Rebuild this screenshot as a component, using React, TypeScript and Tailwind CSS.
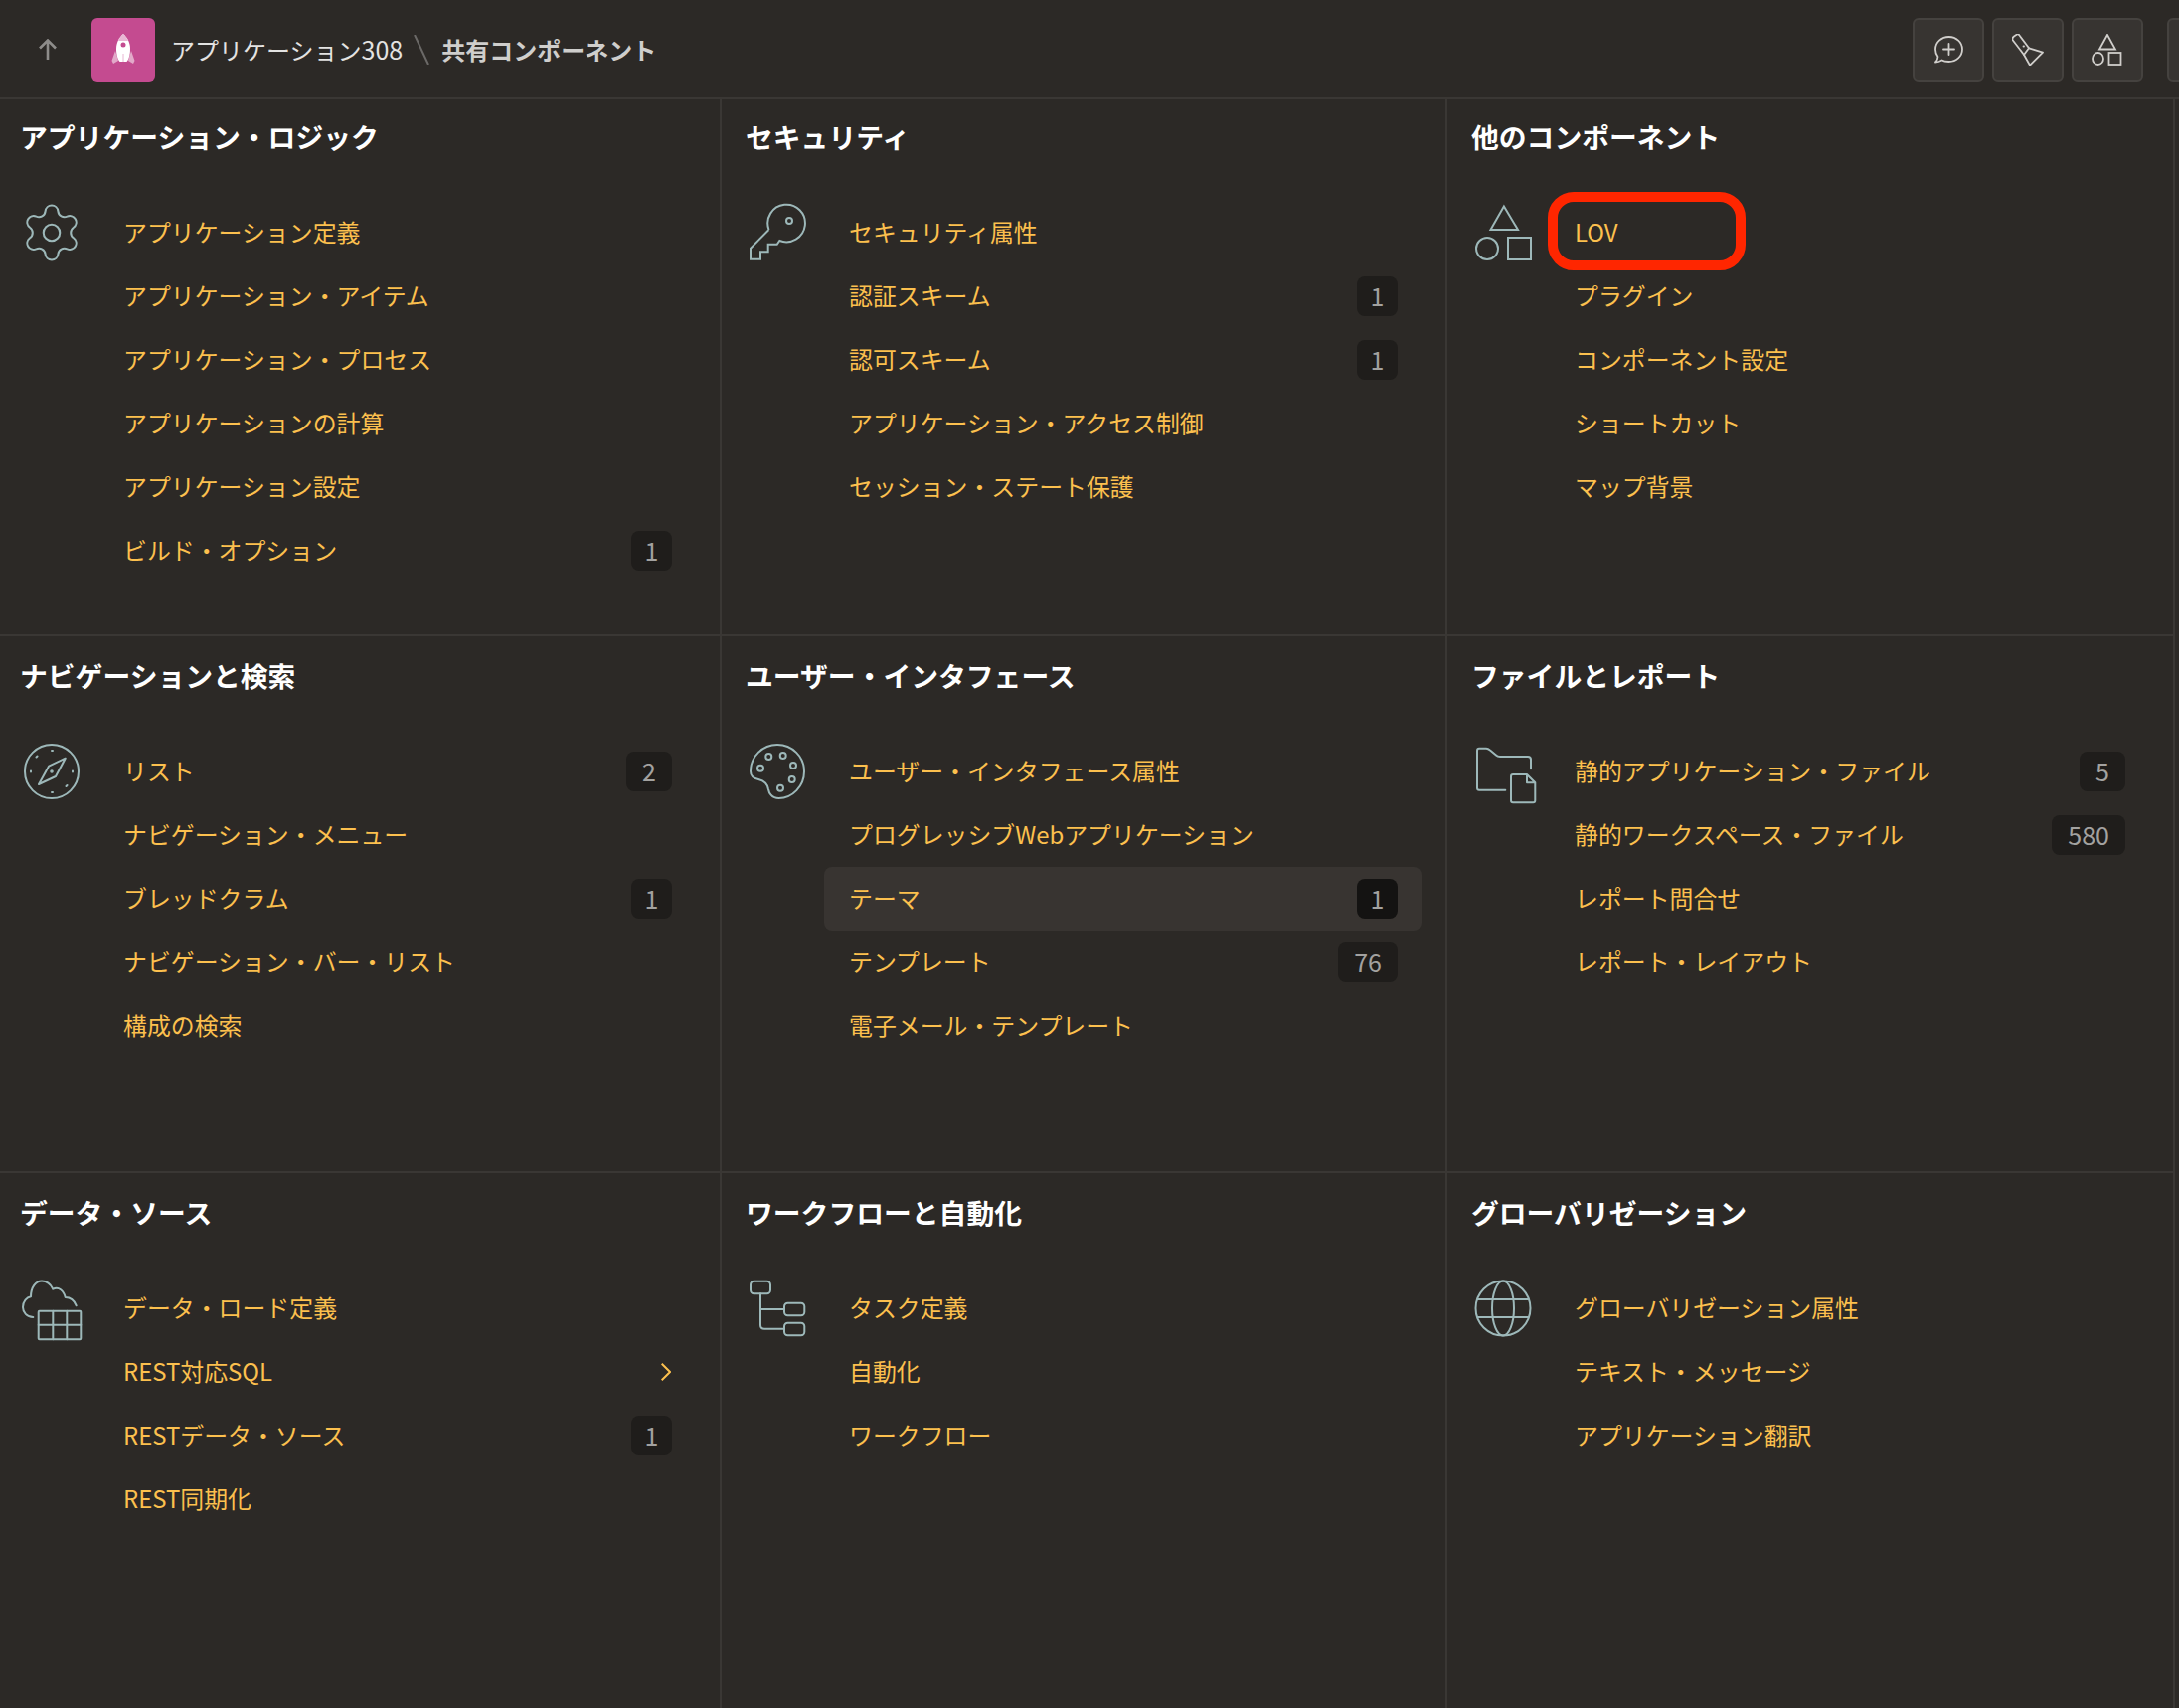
import { Settings } from "lucide-react";
import type { ReactNode } from "react";

type Item = { label: string; badge?: string; chevron?: boolean; active?: boolean; marked?: boolean };
type Section = { title: string; icon: ReactNode; items: Item[] };

const Icon = ({ children }: { children: ReactNode }) => (
  <svg
    viewBox="0 0 56 56"
    className="block h-[56px] w-[56px] overflow-visible text-[#9db8b9]"
    fill="none"
    stroke="currentColor"
    strokeWidth="2"
    strokeLinejoin="round"
    strokeLinecap="round"
  >
    {children}
  </svg>
);

const GearIcon = () => <Settings size={66} strokeWidth={0.75} className="-ml-[5px] -mt-[5px] text-[#9db8b9]" />;

const KeyIcon = () => (
  <Icon>
    <path strokeLinejoin="miter" strokeLinecap="butt" d="M19.5 25 L1 43.7 V54.7 H11 V47.3 H18.7 V39.7 H27.7 L30.3 36 A18.8 18.8 0 1 0 19.5 25" />
    <circle cx="40" cy="16" r="3" />
  </Icon>
);

const ShapesIcon = () => (
  <Icon>
    <path strokeLinejoin="miter" d="M28.9 1.5 L15.5 25 H43 Z" />
    <circle cx="12" cy="44" r="11" />
    <rect x="33" y="33" width="23" height="22" strokeLinejoin="miter" />
  </Icon>
);

const CompassIcon = () => (
  <Icon>
    <circle cx="28" cy="28" r="27" />
    <path d="M28 7h1M28 49h1M7 27.5v1M49 27.5v1M12.5 13.5l1-1M42.5 43l1-1" />
    <path d="M41.7 14.7 25 22.7 15 41 32 33Z" />
    <circle cx="28" cy="28" r="0.8" />
  </Icon>
);

const PaletteIcon = () => (
  <Icon>
    <path d="M1 28C1 13 13 1 28 1C43 1 55 13 55 28C55 43 43 55 29.5 55C22 55 19.5 49 19 46C18 39 13 37 9 36C4 35 1 33 1 28Z" />
    <circle cx="19.3" cy="13" r="3" />
    <circle cx="33.7" cy="12" r="3" />
    <circle cx="44" cy="22" r="3" />
    <circle cx="42.7" cy="36" r="3" />
    <circle cx="31" cy="44.7" r="3" />
    <circle cx="11" cy="24.7" r="3" />
  </Icon>
);

const FolderIcon = () => (
  <Icon>
    <path d="M30.3 46.7H4Q2 46.7 2 44.7V7Q2 4.7 4 4.7H11Q13 4.7 15 6.5L21 11.5Q22.5 13 25 13H53Q56 13 56 16V25.3" />
    <path d="M52 31H38Q36 31 36 33V57.3Q36 59.3 38 59.3H58.3Q60.3 59.3 60.3 57.3V39.3ZM52 31V39.3H60.3" />
  </Icon>
);

const CloudTableIcon = () => (
  <Icon>
    <path d="M9.3 37C3 37 -1 32 -1 27C-1 21 3 17 7 16.3C7 7 12 .5 18 .5C23 .5 27 4 29.3 8.7C35 6 40 10 41.7 17C47 17 51 21 52.7 25.3" />
    <rect x="14.7" y="30.7" width="42.6" height="28.6" rx="1" />
    <path d="M29.3 30.7V59.3M43.3 30.7V59.3M14.7 44.7H57.3" />
  </Icon>
);

const TreeIcon = () => (
  <Icon>
    <rect x="1" y="0.7" width="20" height="12.6" rx="3.5" />
    <rect x="35" y="22.7" width="20.3" height="12.6" rx="3.5" />
    <rect x="35" y="42.7" width="20.3" height="12.6" rx="3.5" />
    <path d="M11 13.3V45Q11 48.7 15 48.7H35M11 29H35" />
  </Icon>
);

const GlobeIcon = () => (
  <Icon>
    <circle cx="28" cy="28" r="27.5" />
    <ellipse cx="28" cy="28" rx="11" ry="27.5" />
    <path d="M2.500 19H53.500M2.500 37H53.500" />
  </Icon>
);

const sections: Section[] = [
  {
    title: "アプリケーション・ロジック",
    icon: <GearIcon />,
    items: [
      { label: "アプリケーション定義" },
      { label: "アプリケーション・アイテム" },
      { label: "アプリケーション・プロセス" },
      { label: "アプリケーションの計算" },
      { label: "アプリケーション設定" },
      { label: "ビルド・オプション", badge: "1" },
    ],
  },
  {
    title: "セキュリティ",
    icon: <KeyIcon />,
    items: [
      { label: "セキュリティ属性" },
      { label: "認証スキーム", badge: "1" },
      { label: "認可スキーム", badge: "1" },
      { label: "アプリケーション・アクセス制御" },
      { label: "セッション・ステート保護" },
    ],
  },
  {
    title: "他のコンポーネント",
    icon: <ShapesIcon />,
    items: [
      { label: "LOV", marked: true },
      { label: "プラグイン" },
      { label: "コンポーネント設定" },
      { label: "ショートカット" },
      { label: "マップ背景" },
    ],
  },
  {
    title: "ナビゲーションと検索",
    icon: <CompassIcon />,
    items: [
      { label: "リスト", badge: "2" },
      { label: "ナビゲーション・メニュー" },
      { label: "ブレッドクラム", badge: "1" },
      { label: "ナビゲーション・バー・リスト" },
      { label: "構成の検索" },
    ],
  },
  {
    title: "ユーザー・インタフェース",
    icon: <PaletteIcon />,
    items: [
      { label: "ユーザー・インタフェース属性" },
      { label: "プログレッシブWebアプリケーション" },
      { label: "テーマ", badge: "1", active: true },
      { label: "テンプレート", badge: "76" },
      { label: "電子メール・テンプレート" },
    ],
  },
  {
    title: "ファイルとレポート",
    icon: <FolderIcon />,
    items: [
      { label: "静的アプリケーション・ファイル", badge: "5" },
      { label: "静的ワークスペース・ファイル", badge: "580" },
      { label: "レポート問合せ" },
      { label: "レポート・レイアウト" },
    ],
  },
  {
    title: "データ・ソース",
    icon: <CloudTableIcon />,
    items: [
      { label: "データ・ロード定義" },
      { label: "REST対応SQL", chevron: true },
      { label: "RESTデータ・ソース", badge: "1" },
      { label: "REST同期化" },
    ],
  },
  {
    title: "ワークフローと自動化",
    icon: <TreeIcon />,
    items: [{ label: "タスク定義" }, { label: "自動化" }, { label: "ワークフロー" }],
  },
  {
    title: "グローバリゼーション",
    icon: <GlobeIcon />,
    items: [{ label: "グローバリゼーション属性" }, { label: "テキスト・メッセージ" }, { label: "アプリケーション翻訳" }],
  },
];

const Row = ({ item }: { item: Item }) => (
  <div className={`relative flex h-[64px] items-center rounded-lg pl-[25px] pr-[24px] ${item.active ? "bg-[#383431]" : ""}`}>
    <span className="-mt-[2px] text-[23.9px] text-[#fcc04e]">{item.label}</span>
    {item.badge && (
      <span
        className={`ml-auto flex h-[40px] items-center justify-center rounded-lg text-[25px] text-[#a3a2a0] ${
          item.badge === "1" ? "w-[41px]" : "px-[16px]"
        } ${item.active ? "bg-[#141312]" : "bg-[#1f1d1b]"}`}
      >
        {item.badge}
      </span>
    )}
    {item.chevron && (
      <svg viewBox="0 0 10 18" className="ml-auto mr-[1px] h-[18px] w-[10px]" fill="none" stroke="#fcc04e" strokeWidth="2">
        <path d="M0.700 0.700 9 9 0.700 17.300" />
      </svg>
    )}
    {item.marked && (
      <div className="absolute -left-[2px] -top-[9px] h-[79px] w-[199px] rounded-[26px] border-[10px] border-[#ff2600]" />
    )}
  </div>
);

const Card = ({ section, index }: { section: Section; index: number }) => (
  <section
    className={`border-r-2 border-[#3a3734] ${index % 3 === 0 ? "pl-[21px]" : "pl-[25px]"} ${
      index > 2 ? "border-t-2" : ""
    }`}
  >
    <h2
      className={`-mx-px h-[104px] pt-[19px] text-[27.8px] font-bold leading-[40px] text-white`}
    >
      {section.title}
    </h2>
    <div className="flex">
      <div className={`w-[78px] shrink-0 pt-[4px] ${index % 3 === 0 ? "pl-[3px]" : "pl-[3px]"}`}>{section.icon}</div>
      <div className="min-w-0 flex-1 pr-[24px]">
        {section.items.map((item) => (
          <Row key={item.label} item={item} />
        ))}
      </div>
    </div>
  </section>
);

const ToolButton = ({ children, className = "" }: { children?: ReactNode; className?: string }) => (
  <button className={`flex h-[64px] w-[72px] shrink-0 items-center justify-center rounded-md border-2 border-[#45423f] bg-[#373431] ${className}`}>
    {children}
  </button>
);

export default function App() {
  return (
    <div
      className="h-[1718px] w-[2192px] overflow-hidden bg-[#2c2926]"
      style={{ fontFamily: '"Noto Sans CJK JP", "Noto Sans", sans-serif' }}
    >
      <header className="flex h-[100px] items-center border-b-2 border-[#3a3734] pt-[2px]">
        <svg viewBox="0 0 20 22" className="ml-[38px] h-[22px] w-[20px]" fill="none" stroke="#8e8c8a" strokeWidth="2.6">
          <path d="M10 21V2M2 9.500 10 1.500l8 8" />
        </svg>
        <div className="ml-[34px] flex h-[64px] w-[64px] items-center justify-center rounded-md bg-[#c44b90]">
          <svg viewBox="0 0 24 32" className="h-[32px] w-[24px]">
            <path d="M4 17 0.500 27 2 30 7 27Z M20 17 23.500 27 22 30 17 27Z" fill="#e2a9c9" />
            <path d="M12 0C8.500 3 5 8 5 15C5 21 6.500 26 8.500 28H15.500C17.500 26 19 21 19 15C19 8 15.500 3 12 0Z" fill="#fff" />
            <path d="M12 0C10 2 8 4 7 7H17C16 4 14 2 12 0Z" fill="#e8b6d3" />
            <circle cx="12" cy="11" r="2.500" fill="#c44b90" />
            <path d="M12 20V28" stroke="#e8b6d3" strokeWidth="1" />
          </svg>
        </div>
        <span className="-mt-[1px] ml-[16px] text-[24px] text-[#e4e3e2]">
          アプリケーション<span className="text-[25px]">308</span>
        </span>
        <svg viewBox="0 0 16 30" className="ml-[11px] h-[30px] w-[16px]" fill="none" stroke="#6b6967" strokeWidth="2">
          <path d="M1 0 15 30" />
        </svg>
        <span className="-mt-[1px] ml-[12px] text-[24px] font-bold text-[#cfcecc]">共有コンポーネント</span>
        <div className="-mr-[60px] ml-auto flex gap-[8px] text-[#d0cecb]">
          <ToolButton>
            <svg viewBox="0 0 32 28" className="h-[28px] w-[32px]" fill="none" stroke="currentColor" strokeWidth="1.800" strokeLinejoin="round" strokeLinecap="round">
              <path d="M3 26.500C6 26.500 8 25.500 9.500 24.500C11 25.500 13 26 16.500 26C24 26 30 20.500 30 13.500C30 6.500 24 1 16.500 1C9 1 3 6.500 3 13.500C3 16.500 4 19 5.500 21C5.500 23 4.500 25 3 26.500Z" />
              <path d="M16.500 8V19M11 13.500H22" />
            </svg>
          </ToolButton>
          <ToolButton>
            <svg viewBox="0 0 32 32" className="h-[32px] w-[32px]" fill="none" stroke="currentColor" strokeWidth="1.800" strokeLinejoin="round" strokeLinecap="round">
              <path d="M0.500 6Q0 4 2 2.500L5 .5Q6.500 0 7.500 1.500L17 14.300L31 18.700L18 31.700L12 21Z" />
              <path d="M12 21 17 14.300M11.500 12.500H12" />
            </svg>
          </ToolButton>
          <ToolButton>
            <svg viewBox="0 0 32 32" className="h-[32px] w-[32px]" fill="none" stroke="currentColor" strokeWidth="1.800">
              <path d="M16 1 8 15.500H24Z" />
              <ellipse cx="6.500" cy="25" rx="5.500" ry="6" />
              <rect x="17.500" y="19" width="12" height="12" />
            </svg>
          </ToolButton>
          <ToolButton className="ml-[16px]" />
        </div>
      </header>
      <div className="-mt-[2px] grid w-[2188px] grid-cols-[726px_730px_732px] grid-rows-[540px_540px_540px]">
        {sections.map((s, i) => (
          <Card key={s.title} section={s} index={i} />
        ))}
      </div>
    </div>
  );
}
